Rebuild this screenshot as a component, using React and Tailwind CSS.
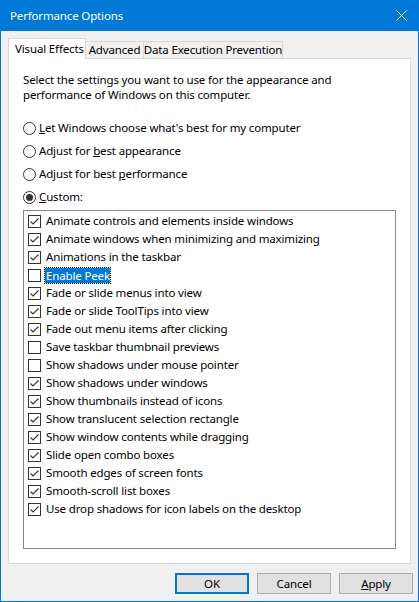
import React from "react";

const FONT = { fontFamily: '"Noto Sans", "Open Sans", sans-serif', letterSpacing: "-0.15px" };

const items = [
  ["Animate controls and elements inside windows", true],
  ["Animate windows when minimizing and maximizing", true],
  ["Animations in the taskbar", true],
  ["Enable Peek", false, true],
  ["Fade or slide menus into view", true],
  ["Fade or slide ToolTips into view", true],
  ["Fade out menu items after clicking", true],
  ["Save taskbar thumbnail previews", false],
  ["Show shadows under mouse pointer", false],
  ["Show shadows under windows", true],
  ["Show thumbnails instead of icons", true],
  ["Show translucent selection rectangle", true],
  ["Show window contents while dragging", true],
  ["Slide open combo boxes", true],
  ["Smooth edges of screen fonts", true],
  ["Smooth-scroll list boxes", true],
  ["Use drop shadows for icon labels on the desktop", true],
];

function Check({ checked }) {
  return (
    <svg width="13" height="13" viewBox="0 0 13 13" className="shrink-0">
      <rect x="0.5" y="0.5" width="12" height="12" fill="#fff" stroke="#333" />
      {checked && (
        <polyline points="2.5,6.5 5,9 10.5,3.5" fill="none" stroke="#333" strokeWidth="1.1" />
      )}
    </svg>
  );
}

function Radio({ checked }) {
  return (
    <svg width="13" height="13" viewBox="0 0 13 13" className="shrink-0">
      <circle cx="6.5" cy="6.5" r="6" fill="#fff" stroke="#333" />
      {checked && <circle cx="6.5" cy="6.5" r="3.5" fill="#333" />}
    </svg>
  );
}

function Btn({ children, def }) {
  return (
    <div
      className={`w-[74px] h-[21px] flex items-center justify-center bg-[#e1e1e1] text-[11.5px] text-black ${
        def ? "border-2 border-[#0078d7]" : "border border-[#adadad]"
      }`}
    >
      {children}
    </div>
  );
}

export default function App() {
  return (
    <div
      className="w-[419px] h-[602px] flex flex-col bg-[#f0f0f0] border-x border-b border-[#0078d7] text-[11.5px] text-black overflow-hidden"
      style={FONT}
    >
      <div className="h-[31px] -mx-px bg-[#0078d7] flex items-center justify-between pl-[10px] pr-[12px] text-white text-[11.5px] shrink-0">
        <span>Performance Options</span>
        <svg width="11" height="11" viewBox="0 0 11 11">
          <path d="M0.5 0.5 L10.5 10.5 M10.5 0.5 L0.5 10.5" stroke="#fff" strokeWidth="1" />
        </svg>
      </div>

      <div className="flex flex-col flex-1 pl-[7px] pr-[7px] pt-[7px]">
        <div className="flex items-end h-[20px] relative z-10 whitespace-nowrap">
          <div className="h-[21px] -mb-px w-[78px] bg-white border-x border-t border-[#d9d9d9] flex items-start pt-[1px] pl-[6px]">
            Visual Effects
          </div>
          <div className="h-[17px] w-[58px] bg-[#f0f0f0] border-t border-r border-[#d9d9d9] flex items-center justify-center">
            Advanced
          </div>
          <div className="h-[17px] w-[139px] bg-[#f0f0f0] border-t border-r border-[#d9d9d9] flex items-center justify-center">
            Data Execution Prevention
          </div>
        </div>

        <div className="h-[506px] bg-white border border-[#d9d9d9] flex flex-col px-[14px] pt-[13px]">
          <div className="leading-[15px]">
            Select the settings you want to use for the appearance and
            <br />
            performance of Windows on this computer.
          </div>
          <div className="flex flex-col mt-[19px] gap-[9px]">
            <div className="flex items-center gap-[3px] h-[14px]">
              <Radio />
              <span>
                <u>L</u>et Windows choose what's best for my computer
              </span>
            </div>
            <div className="flex items-center gap-[3px] h-[14px]">
              <Radio />
              <span>
                Adjust for <u>b</u>est appearance
              </span>
            </div>
            <div className="flex items-center gap-[3px] h-[14px]">
              <Radio />
              <span>
                Adjust for best <u>p</u>erformance
              </span>
            </div>
            <div className="flex items-center gap-[3px] h-[14px]">
              <Radio checked />
              <span>
                <u>C</u>ustom:
              </span>
            </div>
          </div>
          <div className="mt-[6px] h-[339px] border border-[#828790] flex flex-col pt-[1px] pl-[4px]">
            {items.map(([label, checked, sel]) => (
              <div key={label} className="h-[18px] flex items-center gap-[4px]">
                <Check checked={checked} />
                <span
                  className={
                    sel
                      ? "bg-[#0078d7] text-white pl-px pr-0 leading-[15px] outline outline-1 outline-dotted outline-black"
                      : "px-px"
                  }
                >
                  {label}
                </span>
              </div>
            ))}
          </div>
        </div>

        <div className="flex justify-end gap-[8px] mt-[9px] mr-[-2px]">
          <Btn def>OK</Btn>
          <Btn>Cancel</Btn>
          <Btn>
            <u>A</u>pply
          </Btn>
        </div>
      </div>
    </div>
  );
}
